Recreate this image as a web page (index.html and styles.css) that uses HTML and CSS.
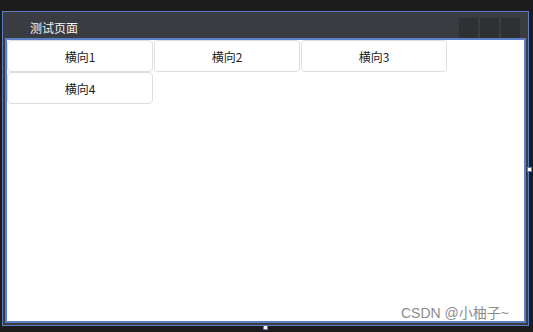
FILE: index.html
```html
<!DOCTYPE html>
<html lang="zh-CN">
<head>
    <meta charset="UTF-8">
    <title>测试页面</title>
    <link rel="stylesheet" href="styles.css">
</head>
<body>
    <div class="window">
        <div class="titlebar">
            <span class="title">测试页面</span>
            <div class="sysbtns">
                <span class="sysbtn"></span>
                <span class="sysbtn"></span>
                <span class="sysbtn"></span>
            </div>
        </div>
        <div class="content">
            <button class="item">横向1</button>
            <button class="item">横向2</button>
            <button class="item">横向3</button>
            <button class="item">横向4</button>
        </div>
        <span class="handle handle-right"></span>
        <span class="handle handle-bottom"></span>
    </div>
    <div class="watermark">CSDN @小柚子~</div>
</body>
</html>
```

FILE: styles.css
```css
body {
    margin: 0;
    width: 533px;
    height: 332px;
    background: #1c1c1c;
    font-family: "Noto Sans CJK SC", "Liberation Sans", sans-serif;
    overflow: hidden;
    position: relative;
}
.window {
    position: relative;
    margin: 11px 0 0 2px;
    width: 521px;
    height: 311px;
    border: 1px solid #5a7fc6;
    background: #3b3c41;
    padding: 0 2px 2px 2px;
    display: flex;
    flex-direction: column;
}
.titlebar {
    height: 26px;
    display: flex;
    align-items: center;
    justify-content: space-between;
}
.title {
    margin-left: 25px;
    margin-top: 5px;
    font-size: 12px;
    color: #eef4f8;
}
.sysbtns {
    display: flex;
    gap: 2px;
    margin-right: 6px;
    margin-top: 5px;
}
.sysbtn {
    width: 19px;
    height: 20px;
    background: #2f3034;
}
.content {
    flex: 1;
    background: #fff;
    border: 2px solid #5b80c8;
    display: flex;
    flex-wrap: wrap;
    align-content: flex-start;
    column-gap: 1px;
}
.item {
    width: 146px;
    height: 32px;
    margin: 0;
    padding: 0;
    background: #fff;
    border: 1px solid #dedede;
    border-radius: 4px;
    font-family: "Noto Sans CJK SC", "Liberation Sans", sans-serif;
    font-size: 12px;
    color: #1f1f1f;
}
.handle {
    position: absolute;
    width: 3px;
    height: 3px;
    background: #fff;
    border: 1px solid #5a7fc6;
}
.handle-right {
    right: -4px;
    top: 155px;
}
.handle-bottom {
    left: 260px;
    bottom: -5px;
}
.watermark {
    position: absolute;
    left: 401px;
    top: 302px;
    font-size: 14px;
    color: #8c8c8c;
    font-family: "Liberation Sans", "Noto Sans CJK SC", sans-serif;
}
```
